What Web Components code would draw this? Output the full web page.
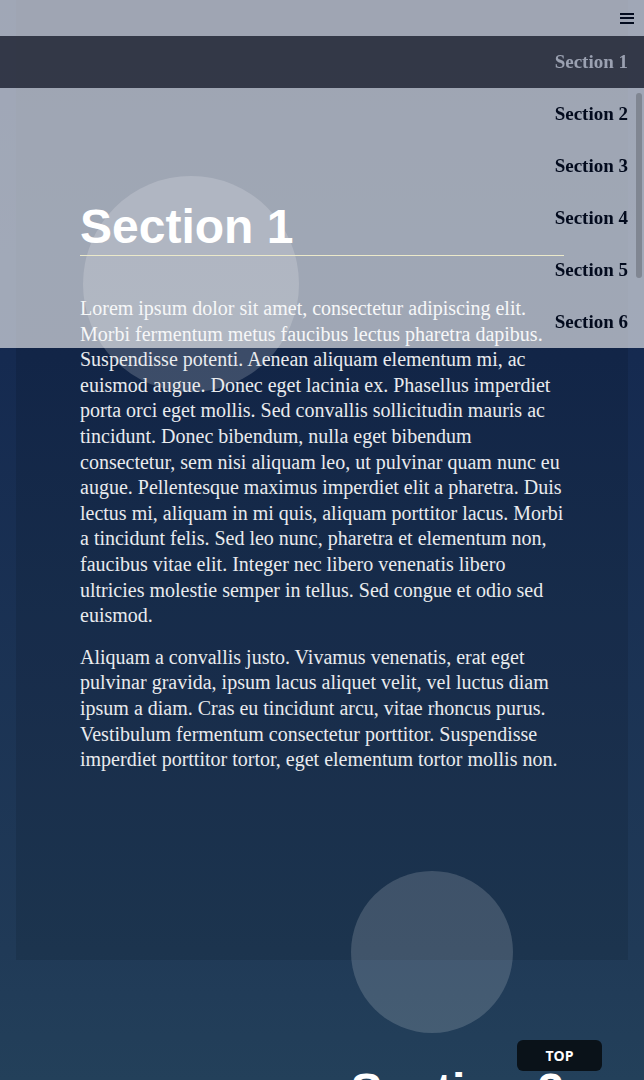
<!DOCTYPE html>
<html lang="en">
<head>
<meta charset="utf-8">
<meta name="viewport" content="width=device-width, initial-scale=1">
<title>Sections</title>
<style>
html, body { margin: 0; }
body { font-family: "Liberation Serif", serif; color: #e9ebee; }
</style>
</head>
<body>
<page-shell>
  <site-nav slot="nav"></site-nav>
  <page-section id="s1" heading="Section 1">
    <p>Lorem ipsum dolor sit amet, consectetur adipiscing elit.<br>Morbi fermentum metus faucibus lectus pharetra dapibus.<br>Suspendisse potenti. Aenean aliquam elementum mi, ac<br>euismod augue. Donec eget lacinia ex. Phasellus imperdiet<br>porta orci eget mollis. Sed convallis sollicitudin mauris ac<br>tincidunt. Donec bibendum, nulla eget bibendum<br>consectetur, sem nisi aliquam leo, ut pulvinar quam nunc eu<br>augue. Pellentesque maximus imperdiet elit a pharetra. Duis<br>lectus mi, aliquam in mi quis, aliquam porttitor lacus. Morbi<br>a tincidunt felis. Sed leo nunc, pharetra et elementum non,<br>faucibus vitae elit. Integer nec libero venenatis libero<br>ultricies molestie semper in tellus. Sed congue et odio sed<br>euismod.</p>
    <p>Aliquam a convallis justo. Vivamus venenatis, erat eget<br>pulvinar gravida, ipsum lacus aliquet velit, vel luctus diam<br>ipsum a diam. Cras eu tincidunt arcu, vitae rhoncus purus.<br>Vestibulum fermentum consectetur porttitor. Suspendisse<br>imperdiet porttitor tortor, eget elementum tortor mollis non.</p>
  </page-section>
  <page-section id="s2" heading="Section 2" class="alt"></page-section>
  <top-button slot="top"></top-button>
</page-shell>
<script>
function define(name, html) {
  const template = document.createElement('template');
  template.innerHTML = html;
  customElements.define(name, class extends HTMLElement {
    constructor() {
      super();
      const root = this.attachShadow({ mode: 'open' });
      root.append(template.content.cloneNode(true));
      const heading = root.querySelector('h2');
      if (heading) heading.textContent = this.getAttribute('heading');
    }
  });
}

define('page-shell', `
<style>
:host { display: block; height: 100vh; overflow: hidden; background: linear-gradient(#12234a, #152a50 33%, #203a57 88%, #23405a); }
main { display: block; }
</style>
<slot name="nav"></slot>
<main><slot></slot></main>
<slot name="top"></slot>`);

define('site-nav', `
<style>
:host { display: block; position: fixed; top: 0; left: 0; right: 0; z-index: 2; background: rgba(255,255,255,.6); font-family: "Liberation Serif", serif; }
header { display: flex; justify-content: flex-end; align-items: center; height: 36px; padding: 0 8px; }
button { display: flex; align-items: center; justify-content: center; border: 0; background: none; padding: 2px; }
svg { display: block; }
ul { margin: 0; padding: 0; list-style: none; }
a { display: block; padding: 0 16px; line-height: 52px; font-size: 19px; font-weight: bold; text-align: right; text-decoration: none; color: #030b1e; }
a[aria-current] { background: rgba(0,4,20,.68); color: #9ba1b1; }
.thumb { position: absolute; right: 2px; top: 93px; width: 6px; height: 185px; border-radius: 3px; background: #808692; }
</style>
<header><button aria-label="Menu" aria-expanded="true"><svg width="14" height="14" viewBox="0 0 14 14" fill="#030b1e"><path d="M0 2h14v2H0zM0 6h14v2H0zM0 11h14v2H0z"/></svg></button></header>
<nav><ul>
<li><a href="#s1" aria-current="true">Section 1</a></li>
<li><a href="#s2">Section 2</a></li>
<li><a href="#s3">Section 3</a></li>
<li><a href="#s4">Section 4</a></li>
<li><a href="#s5">Section 5</a></li>
<li><a href="#s6">Section 6</a></li>
</ul></nav>
<div class="thumb"></div>`);

define('page-section', `
<style>
:host { display: block; position: relative; margin: 0 16px; padding: 201px 64px 187px; background: rgba(0,0,0,.1); }
:host(.alt) { padding-top: 105px; background: none; text-align: right; }
.disc { position: absolute; top: 176px; left: 67px; width: 216px; height: 216px; border-radius: 50%; background: rgba(255,255,255,.18); }
:host(.alt) .disc { top: -89px; left: auto; right: 115px; width: 162px; height: 162px; background: rgba(255,255,255,.16); }
h2 { position: relative; margin: 0 0 40px; padding-bottom: 2px; font: bold 48px/52px "Liberation Sans", sans-serif; color: #fff; border-bottom: 1px solid #cdc87c; }
.body { display: flex; flex-direction: column; gap: 16px; position: relative; }
::slotted(p) { margin: 0; font-size: 20px; line-height: 1.28; white-space: nowrap; }
</style>
<div class="disc"></div>
<h2></h2>
<div class="body"><slot></slot></div>`);

define('top-button', `
<style>
:host { display: block; position: fixed; right: 42px; bottom: 9px; z-index: 3; }
button { display: block; width: 85px; height: 31px; border: 0; border-radius: 6px; padding: 0; background: #0a1219; color: #fff; font: bold 14px/31px "Open Sans", sans-serif; }
</style>
<button>TOP</button>`);
</script>
</body>
</html>
